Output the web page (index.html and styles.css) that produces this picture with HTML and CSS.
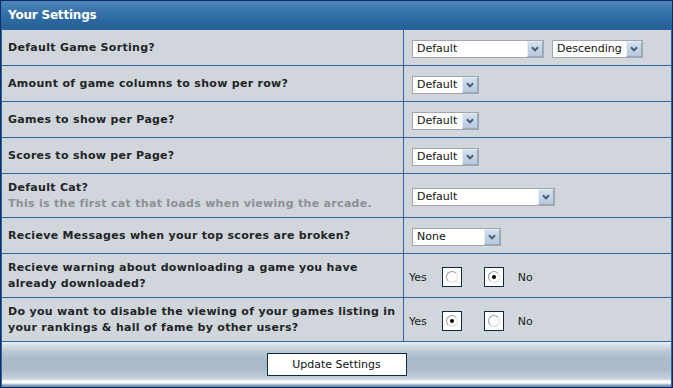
FILE: index.html
```html
<!DOCTYPE html>
<html>
<head>
<meta charset="utf-8">
<link rel="stylesheet" href="styles.css">
</head>
<body>
<div class="panel">
  <div class="header">Your Settings</div>

  <div class="row">
    <div class="label">Default Game Sorting?</div>
    <div class="field">
      <span class="sel w132"><span class="val">Default</span><span class="arrow"><svg viewBox="0 0 16 16"><path d="M4.5 6 L8 9.5 L11.5 6" /></svg></span></span>
      <span class="sel w91"><span class="val">Descending</span><span class="arrow"><svg viewBox="0 0 16 16"><path d="M4.5 6 L8 9.5 L11.5 6" /></svg></span></span>
    </div>
  </div>

  <div class="row">
    <div class="label">Amount of game columns to show per row?</div>
    <div class="field">
      <span class="sel w67"><span class="val">Default</span><span class="arrow"><svg viewBox="0 0 16 16"><path d="M4.5 6 L8 9.5 L11.5 6" /></svg></span></span>
    </div>
  </div>

  <div class="row">
    <div class="label">Games to show per Page?</div>
    <div class="field">
      <span class="sel w67"><span class="val">Default</span><span class="arrow"><svg viewBox="0 0 16 16"><path d="M4.5 6 L8 9.5 L11.5 6" /></svg></span></span>
    </div>
  </div>

  <div class="row">
    <div class="label">Scores to show per Page?</div>
    <div class="field">
      <span class="sel w67"><span class="val">Default</span><span class="arrow"><svg viewBox="0 0 16 16"><path d="M4.5 6 L8 9.5 L11.5 6" /></svg></span></span>
    </div>
  </div>

  <div class="row tall">
    <div class="label">Default Cat?<br><span class="desc">This is the first cat that loads when viewing the arcade.</span></div>
    <div class="field">
      <span class="sel w143"><span class="val">Default</span><span class="arrow"><svg viewBox="0 0 16 16"><path d="M4.5 6 L8 9.5 L11.5 6" /></svg></span></span>
    </div>
  </div>

  <div class="row">
    <div class="label">Recieve Messages when your top scores are broken?</div>
    <div class="field">
      <span class="sel w89"><span class="val">None</span><span class="arrow"><svg viewBox="0 0 16 16"><path d="M4.5 6 L8 9.5 L11.5 6" /></svg></span></span>
    </div>
  </div>

  <div class="row tall">
    <div class="label">Recieve warning about downloading a game you have already downloaded?</div>
    <div class="field radios">
      <span class="opt">Yes</span>
      <span class="rbox"><span class="radio"></span></span>
      <span class="rbox"><span class="radio on"></span></span>
      <span class="opt">No</span>
    </div>
  </div>

  <div class="row tall">
    <div class="label">Do you want to disable the viewing of your games listing in your rankings &amp; hall of fame by other users?</div>
    <div class="field radios">
      <span class="opt">Yes</span>
      <span class="rbox"><span class="radio on"></span></span>
      <span class="rbox"><span class="radio"></span></span>
      <span class="opt">No</span>
    </div>
  </div>

  <div class="footer">
    <button class="btn" type="button">Update Settings</button>
  </div>
</div>
</body>
</html>
```

FILE: styles.css
```css
html, body {
  margin: 0;
  padding: 0;
  background: #ffffff;
}
body {
  font-family: "DejaVu Sans", Verdana, sans-serif;
  font-size: 11px;
  color: #1a1a1a;
}
.panel {
  width: 673px;
  height: 388px;
  box-sizing: border-box;
  border: 1px solid #0d2c63;
  background: #d0d6dc;
}
.header {
  height: 28px;
  box-sizing: border-box;
  padding-left: 7px;
  line-height: 28px;
  color: #ffffff;
  font-weight: bold;
  font-size: 12px;
  letter-spacing: -0.2px;
  background: linear-gradient(#4f87ba 0%, #3673aa 40%, #235e97 100%);
}
.row {
  display: grid;
  grid-template-columns: 402px 1fr;
  height: 36px;
  box-sizing: border-box;
  border-top: 1px solid #2f65a0;
  border-left: 1px solid #2f65a0;
  border-right: 1px solid #2f65a0;
}
.row.tall {
  height: 44px;
}
.label {
  border-right: 1px solid #2f65a0;
  padding-left: 6px;
  display: flex;
  flex-direction: column;
  justify-content: center;
  font-weight: bold;
  line-height: 16px;
  letter-spacing: 0.3px;
  color: #222426;
}
.desc {
  color: #8b9095;
}
.field {
  display: flex;
  align-items: center;
  padding-left: 8px;
  padding-top: 3px;
  gap: 8px;
}
.sel {
  display: flex;
  height: 18px;
  box-sizing: border-box;
  border: 1px solid #a2a6aa;
  background: #ffffff;
}
.w132 { width: 132px; }
.w91 { width: 91px; }
.w67 { width: 67px; }
.w143 { width: 143px; }
.w89 { width: 89px; }
.val {
  flex: 1;
  padding-left: 4px;
  line-height: 16px;
  color: #111;
  white-space: nowrap;
  overflow: hidden;
}
.arrow {
  width: 16px;
  height: 16px;
  box-sizing: border-box;
  border: 1px solid #e8eef6;
  border-right-color: #96a9bf;
  border-bottom-color: #96a9bf;
  background: linear-gradient(#d2e0ef, #b5c9e0);
}
.arrow svg {
  display: block;
  width: 14px;
  height: 14px;
}
.arrow path {
  fill: none;
  stroke: #4a5868;
  stroke-width: 2.2;
}
.radios {
  gap: 0;
  padding-left: 5px;
}
.opt {
  color: #1a1a1a;
}
.rbox {
  width: 20px;
  height: 20px;
  box-sizing: border-box;
  border: 1px solid #0f2a44;
  background: #ffffff;
  display: flex;
  align-items: center;
  justify-content: center;
}
.radios .opt:first-child { margin-right: 15px; }
.radios .rbox + .rbox { margin-left: 22px; margin-right: 14px; }
.radio {
  width: 12px;
  height: 12px;
  box-sizing: border-box;
  border-radius: 50%;
  border: 1px solid #9a9a9a;
  border-right-color: #dcdcdc;
  border-bottom-color: #dcdcdc;
  display: flex;
  align-items: center;
  justify-content: center;
}
.radio.on::after {
  content: "";
  width: 4px;
  height: 4px;
  border-radius: 50%;
  background: #000000;
}
.footer {
  height: 46px;
  box-sizing: border-box;
  border-top: 1px solid #2f65a0;
  border-left: 1px solid #2f65a0;
  border-right: 1px solid #2f65a0;
  display: flex;
  justify-content: center;
  padding-top: 11px;
  background: linear-gradient(#eef2f6 0px, #d6dee6 3px, #bccad6 9px, #a9b9c7 18px, #adbcca 28px, #c6d1db 37px, #ffffff 39px, #ffffff 41px, #b8c8d8 42px, #5a7fa8 45px);
}
.btn {
  width: 140px;
  height: 23px;
  box-sizing: border-box;
  border: 1px solid #0f2a44;
  background: #ffffff;
  font-family: "DejaVu Sans", Verdana, sans-serif;
  font-size: 11px;
  color: #111;
  padding: 0;
}
```
